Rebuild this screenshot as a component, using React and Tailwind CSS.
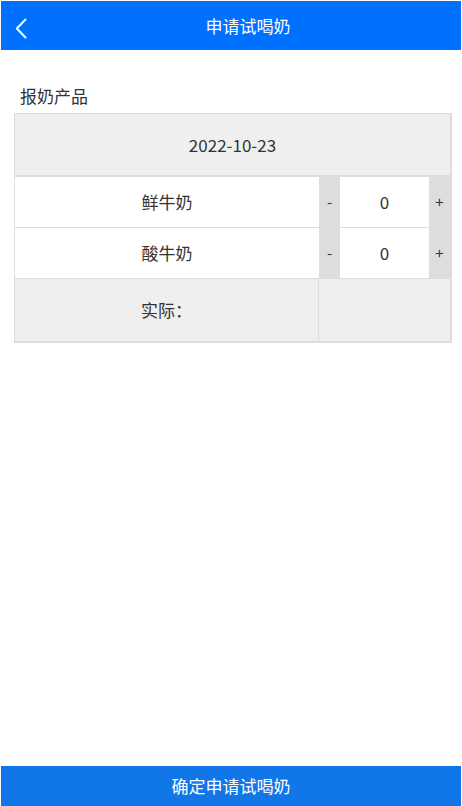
export default function App() {
  const items = ["鲜牛奶", "酸牛奶"];

  return (
    <div
      className="h-screen flex flex-col px-px pt-px bg-white text-[#333]"
      style={{ fontFamily: '"Noto Sans CJK SC", "Noto Sans", sans-serif' }}
    >
      <header className="relative h-[49px] shrink-0 bg-[#0070ff] flex items-center justify-center pl-[34px]">
        <svg
          className="absolute left-[14px] top-[17px]"
          width="12"
          height="21"
          viewBox="0 0 12 21"
          fill="none"
        >
          <path d="M10.5 1.5 L1.8 10.5 L10.5 19.5" stroke="#fff" strokeWidth="2" strokeLinecap="round" strokeLinejoin="round" />
        </svg>
        <h1 className="text-[17px] text-white">申请试喝奶</h1>
      </header>

      <main className="flex-1">
        <p className="pt-[34px] pl-[19px] h-[58px] leading-6 text-[17px] box-border">报奶产品</p>
        <div className="ml-[13px] mt-[5px] w-[438px] border-t border-l border-r-2 border-b-2 border-[#ddd]">
          <div className="h-[63px] bg-[#efefef] border-b-2 border-[#ddd] flex items-center justify-center text-[17px]">
            2022-10-23
          </div>
          {items.map((name) => (
            <div key={name} className="flex h-[51px]">
              <div className="w-[304px] border-b border-[#ddd] flex items-center justify-center text-[17px]">
                {name}
              </div>
              <button className="w-[21px] bg-[#ddd] flex items-center justify-center text-[15px]">-</button>
              <div className="w-[89px] border-b border-[#ddd] flex items-center justify-center text-[17px]">0</div>
              <button className="w-[21px] bg-[#ddd] flex items-center justify-center text-[15px]">+</button>
            </div>
          ))}
          <div className="flex h-[62px] bg-[#efefef]">
            <div className="w-[304px] border-r border-[#ddd] flex items-center justify-center text-[17px]">
              实际：
            </div>
            <div className="flex-1"></div>
          </div>
        </div>
      </main>

      <button className="h-10 shrink-0 bg-[#1177e8] text-white text-[17px]">确定申请试喝奶</button>
    </div>
  );
}
